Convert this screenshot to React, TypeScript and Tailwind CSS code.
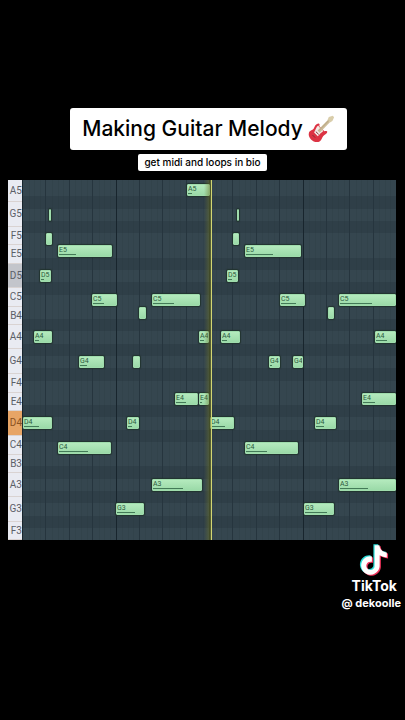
import clsx from 'clsx'

interface PianoKey {
  name: string
  height: string
  tone?: 'shaded' | 'active'
}

interface Note {
  pitch: string
  start: number
  end: number
  // Length of the velocity line, 0 for none
  line?: number
}

// White keys next to a gap of two semitones are taller
const KEYS: PianoKey[] = [
  { name: 'A5', height: 'h-[22px]' },
  { name: 'G5', height: 'h-[25px]' },
  { name: 'F5', height: 'h-[18px]' },
  { name: 'E5', height: 'h-[19px]' },
  { name: 'D5', height: 'h-[24px]', tone: 'shaded' },
  { name: 'C5', height: 'h-[19px]' },
  { name: 'B4', height: 'h-[18px]' },
  { name: 'A4', height: 'h-[24px]' },
  { name: 'G4', height: 'h-[25px]' },
  { name: 'F4', height: 'h-[19px]' },
  { name: 'E4', height: 'h-[18px]' },
  { name: 'D4', height: 'h-[25px]', tone: 'active' },
  { name: 'C4', height: 'h-[19px]' },
  { name: 'B3', height: 'h-[18px]' },
  { name: 'A3', height: 'h-[24px]' },
  { name: 'G3', height: 'h-[25px]' },
  { name: 'F3', height: 'h-[18px]' },
]

// Every semitone from top to bottom
const ROWS = [
  'A5', 'G#5', 'G5', 'F#5', 'F5', 'E5', 'D#5', 'D5', 'C#5', 'C5',
  'B4', 'A#4', 'A4', 'G#4', 'G4', 'F#4', 'F4', 'E4', 'D#4', 'D4', 'C#4', 'C4',
  'B3', 'A#3', 'A3', 'G#3', 'G3', 'F#3', 'F3',
]

// Four bars, in ticks
const LENGTH = 374

const NOTES: Note[] = [
  { pitch: 'A5', start: 165, end: 188, line: 4 },
  { pitch: 'G5', start: 27, end: 29 },
  { pitch: 'G5', start: 215, end: 217 },
  { pitch: 'F5', start: 24, end: 30 },
  { pitch: 'F5', start: 211, end: 217 },
  { pitch: 'E5', start: 36, end: 90, line: 17 },
  { pitch: 'E5', start: 223, end: 279, line: 27 },
  { pitch: 'D5', start: 18, end: 29, line: 3 },
  { pitch: 'D5', start: 205, end: 216, line: 4 },
  { pitch: 'C5', start: 70, end: 95, line: 11 },
  { pitch: 'C5', start: 130, end: 178, line: 21 },
  { pitch: 'C5', start: 258, end: 283, line: 15 },
  { pitch: 'C5', start: 317, end: 374, line: 32 },
  { pitch: 'B4', start: 117, end: 124 },
  { pitch: 'B4', start: 306, end: 312 },
  { pitch: 'A4', start: 12, end: 30, line: 4 },
  { pitch: 'A4', start: 177, end: 187, line: 4 },
  { pitch: 'A4', start: 199, end: 218, line: 5 },
  { pitch: 'A4', start: 353, end: 374, line: 11 },
  { pitch: 'G4', start: 57, end: 82, line: 7 },
  { pitch: 'G4', start: 111, end: 118 },
  { pitch: 'G4', start: 247, end: 258, line: 2 },
  { pitch: 'G4', start: 271, end: 281, line: 0 },
  { pitch: 'E4', start: 153, end: 176, line: 10 },
  { pitch: 'E4', start: 177, end: 187, line: 2 },
  { pitch: 'E4', start: 340, end: 374, line: 12 },
  { pitch: 'D4', start: 1, end: 30, line: 15 },
  { pitch: 'D4', start: 105, end: 117, line: 4 },
  { pitch: 'D4', start: 188, end: 212, line: 14 },
  { pitch: 'D4', start: 293, end: 314, line: 8 },
  { pitch: 'C4', start: 36, end: 89, line: 29 },
  { pitch: 'C4', start: 223, end: 276, line: 21 },
  { pitch: 'A3', start: 130, end: 180, line: 30 },
  { pitch: 'A3', start: 317, end: 374, line: 28 },
  { pitch: 'G3', start: 94, end: 122, line: 18 },
  { pitch: 'G3', start: 282, end: 312, line: 22 },
]

const TIKTOK_PATH =
  'M12.525.02c1.31-.02 2.61-.01 3.91-.02.08 1.53.63 3.09 1.75 4.17 1.12 1.11 2.7 1.62 4.24 1.79v4.03c-1.44-.05-2.89-.35-4.2-.97-.57-.26-1.1-.59-1.62-.93-.01 2.92.01 5.84-.02 8.75-.08 1.4-.54 2.79-1.35 3.94-1.31 1.92-3.58 3.17-5.91 3.21-1.43.08-2.86-.31-4.08-1.03-2.02-1.19-3.44-3.37-3.65-5.71-.02-.5-.03-1-.01-1.49.18-1.9 1.12-3.72 2.58-4.96 1.66-1.44 3.98-2.13 6.15-1.72.02 1.48-.04 2.96-.04 4.44-.99-.32-2.15-.23-3.02.37-.63.41-1.11 1.04-1.36 1.75-.21.51-.15 1.07-.14 1.61.24 1.64 1.82 3.02 3.5 2.87 1.12-.01 2.19-.66 2.77-1.61.19-.33.4-.67.41-1.06.1-1.79.06-3.57.07-5.36.01-4.03-.01-8.05.02-12.07z'

const percent = (ticks: number) => `${(ticks / LENGTH) * 100}%`

const GuitarIcon = () => (
  <svg viewBox="0 0 28 28" className="w-7 h-7 shrink-0" aria-hidden="true">
    <path
      d="M2 17.500c.8-2.300 3.800-2 4.900-4.200.9-1.900 1.700-4.300 4.300-4.700 1.500-.1 1.700 1.200 1 2.400l5.200 5.200c1-.3 2.700-.6 2.900.5.2 1.600-2.700 2.800-4 4.300-1.300 1.600-1.500 4.200-3.700 5.500-2.600 1.400-6.500.2-8.600-2-2-2-2.800-4.800-2-7z"
      fill="#dc3343"
    />
    <path
      d="M9 13.500c.4-1.300 1.200-2.300 2.200-3l1.300 1.700 3.800 3.800c-.9 1.200-2.500 1.800-3.600 3.300l-1.900 1.900-3.700-3.700z"
      fill="#f5ece8"
    />
    <path d="M10.500 15.500l10.300-10.600 2.300 2.200-10.400 10.700z" fill="#cdbd9b" />
    <path
      d="M20.400 5.300l1.400-3.200 4-1.300 1.300 1.500-1.700 3.600-2.500 1.600z"
      fill="#d9cdaa"
    />
    <path d="M12 15.500l10-10.200" stroke="#a8956f" strokeWidth="0.6" />
    <path
      d="M8.800 16.600l2.900 2.800M5.500 20l2.600 2.600"
      stroke="#7d3038"
      strokeWidth="1"
    />
  </svg>
)

const TikTokIcon = () => (
  <svg viewBox="-1 -1 26 26" className="w-8 h-8" aria-hidden="true">
    <path d={TIKTOK_PATH} fill="#2bdcd8" transform="translate(-1 -0.8)" />
    <path d={TIKTOK_PATH} fill="#f0325a" transform="translate(1 0.8)" />
    <path d={TIKTOK_PATH} fill="#fff" />
  </svg>
)

const Keyboard = () => (
  <ul className="w-[14px] shrink-0 bg-[#e9ebf2]">
    {KEYS.map(({ name, height, tone }) => (
      <li
        key={name}
        className={clsx(
          'flex items-center justify-end border-b border-[#d9d3d2] text-[10px] leading-none',
          height,
          tone === 'shaded' && 'bg-[#c3c5cb]',
          tone === 'active'
            ? 'bg-[#e7a566] text-[#8a5222]'
            : 'text-[#5b6068]',
        )}
      >
        {name}
      </li>
    ))}
  </ul>
)

const Grid = () => (
  <div className="flex flex-col h-full pt-1">
    {ROWS.map((row) => (
      <div
        key={row}
        className={clsx(
          'flex-1',
          row.includes('#') ? 'bg-[#2f3f48]' : 'bg-[#35464f]',
        )}
      />
    ))}
    <div className="absolute inset-0 grid grid-cols-16">
      {Array.from({ length: 16 }, (_, beat) => (
        <div
          key={beat}
          className={clsx(
            'grid grid-cols-4 border-l',
            beat % 4 === 0 ? 'border-[#18252d]' : 'border-[#26353e]',
          )}
        >
          <span />
          <span className="border-l border-[#26353e]/20" />
          <span className="border-l border-[#26353e]/20" />
          <span className="border-l border-[#26353e]/20" />
        </div>
      ))}
    </div>
  </div>
)

const NoteBlock = ({ pitch, start, end, line }: Note) => (
  <div
    className="absolute h-3 overflow-hidden rounded-[1px] border border-[#9fdcac] bg-linear-to-b from-[#b4eabd] to-[#9bdaa8] shadow-[0_0_1px_1px_#22332f]"
    style={{
      left: percent(start),
      width: percent(end - start),
      top: `${(ROWS.indexOf(pitch) / ROWS.length) * 100}%`,
    }}
  >
    {line !== undefined && (
      <span className="block text-[7px] leading-[8px] text-[#2c5a3d]">
        {pitch}
      </span>
    )}
    {!!line && (
      <span
        className="block h-px bg-[#437a57]"
        style={{ width: `${line}px` }}
      />
    )}
  </div>
)

const PianoRoll = () => (
  <section
    aria-label="Piano roll"
    className="flex w-full pl-2 pr-[9px] mt-[9px] font-[Roboto,sans-serif]"
  >
    <Keyboard />
    <div className="relative flex-1 bg-[#35464f] overflow-hidden">
      <Grid />
      <div className="absolute inset-x-0 top-1 bottom-0">
        {NOTES.map((note) => (
          <NoteBlock key={`${note.pitch}-${note.start}`} {...note} />
        ))}
      </div>
      {/* Playhead with its trail */}
      <div
        className="absolute inset-y-0 w-2 -translate-x-full border-r border-[#d3d673] bg-linear-to-r from-transparent to-[#6f7424]/60"
        style={{ left: percent(190) }}
      />
    </div>
  </section>
)

const App = () => {
  return (
    <main className="flex flex-col items-center min-h-screen bg-black pt-[108px] font-[Inter,sans-serif]">
      <h1 className="flex items-center gap-1 h-[42px] px-3 ml-3 rounded-[3px] bg-white text-[21px] font-medium text-black whitespace-nowrap">
        Making Guitar Melody
        <GuitarIcon />
      </h1>
      <p className="h-[17px] mt-1 px-1.5 rounded-[2px] bg-white text-[10px] leading-[16px] font-medium text-black whitespace-nowrap">
        get midi and loops in bio
      </p>

      <PianoRoll />

      <footer className="flex flex-col items-end self-end pr-1 mt-[4px] text-white">
        <div className="flex flex-col items-center mr-1">
          <TikTokIcon />
          <span className="text-[14px] leading-[20px] font-bold">TikTok</span>
        </div>
        <span className="text-[11px] leading-[14px] font-bold">@ dekoolle</span>
      </footer>
    </main>
  )
}

export default App
